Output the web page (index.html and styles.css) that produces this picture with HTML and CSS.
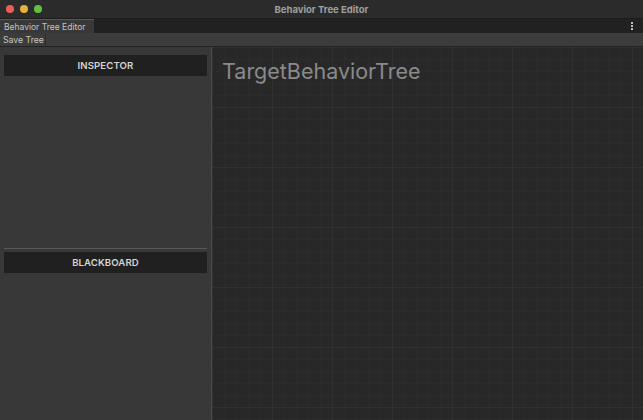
FILE: index.html
```html
<!DOCTYPE html>
<html>
<head>
<meta charset="utf-8">
<link rel="stylesheet" href="styles.css">
</head>
<body>
<div class="window">
  <div class="titlebar">
    <div class="lights">
      <span class="light red"></span>
      <span class="light yellow"></span>
      <span class="light green"></span>
    </div>
    <div class="title">Behavior Tree Editor</div>
  </div>
  <div class="tabbar">
    <div class="tab">Behavior Tree Editor</div>
    <div class="kebab"><span></span><span></span><span></span></div>
  </div>
  <div class="toolbar">
    <div class="tool-btn">Save Tree</div>
  </div>
  <div class="main">
    <div class="sidebar">
      <div class="section inspector">
        <div class="section-header">INSPECTOR</div>
      </div>
      <div class="section blackboard">
        <div class="section-header">BLACKBOARD</div>
      </div>
    </div>
    <div class="canvas">
      <div class="tree-title">TargetBehaviorTree</div>
    </div>
  </div>
</div>
</body>
</html>
```
FILE: styles.css
```css
* { box-sizing: border-box; }
html, body { margin: 0; padding: 0; width: 643px; height: 420px; overflow: hidden; background: #282828; }
body { font-family: "Inter", "Liberation Sans", sans-serif; }
.window { display: flex; flex-direction: column; width: 643px; height: 420px; }
.titlebar { height: 18px; background: #2b2b2b; display: flex; align-items: center; position: relative; flex: none; }
.lights { display: flex; gap: 6px; padding-left: 6px; }
.light { width: 8px; height: 8px; border-radius: 50%; display: block; }
.red { background: #ec5f57; }
.yellow { background: #e3b33c; }
.green { background: #5fc243; }
.title { position: absolute; left: 0; right: 0; text-align: center; font-size: 9.5px; font-weight: 700; color: #a0a0a0; pointer-events: none; }
.tabbar { height: 15px; background: #212121; display: flex; align-items: stretch; justify-content: space-between; flex: none; border-top: 1px solid #1c1c1c; }
.tab { background: #383838; border-top: 1px solid #4c5a7a; width: 94px; font-size: 8.5px; color: #c4c4c4; padding-left: 4px; display: flex; align-items: center; white-space: nowrap; }
.kebab { display: flex; flex-direction: column; justify-content: center; gap: 1px; padding-right: 10px; }
.kebab span { width: 2px; height: 2px; background: #bdbdbd; display: block; }
.toolbar { height: 14px; background: #3c3c3c; display: flex; flex: none; border-bottom: 1px solid #232323; }
.tool-btn { font-size: 8.7px; color: #c4c4c4; padding: 0 2px 0 3px; display: flex; align-items: center; border-right: 1px solid #2e2e2e; width: 46px; white-space: nowrap; }
.main { flex: 1; display: flex; min-height: 0; }
.sidebar { width: 212px; background: #383838; border-right: 1px solid #4a4a4a; display: flex; flex-direction: column; padding: 8px 4px 0 4px; flex: none; }
.section-header { height: 21px; background: #202020; color: #d4d4d4; font-size: 9.6px; font-weight: 600; letter-spacing: 0.1px; display: flex; align-items: center; justify-content: center; }
.inspector { height: 193px; }
.blackboard { border-top: 1px solid #585858; padding-top: 3px; flex: 1; }
.canvas { flex: 1; background-color: #282828;
  background-image:
    linear-gradient(to right, rgba(255,255,255,0.022) 1px, transparent 1px),
    linear-gradient(to bottom, rgba(255,255,255,0.022) 1px, transparent 1px),
    linear-gradient(to right, rgba(255,255,255,0.012) 1px, transparent 1px),
    linear-gradient(to bottom, rgba(255,255,255,0.012) 1px, transparent 1px);
  background-size: 60px 60px, 60px 60px, 12px 12px, 12px 12px;
  padding: 11px 10px;
}
.tree-title { font-size: 21.5px; color: #8a8a8a; font-weight: 400; line-height: 26px; }
```
